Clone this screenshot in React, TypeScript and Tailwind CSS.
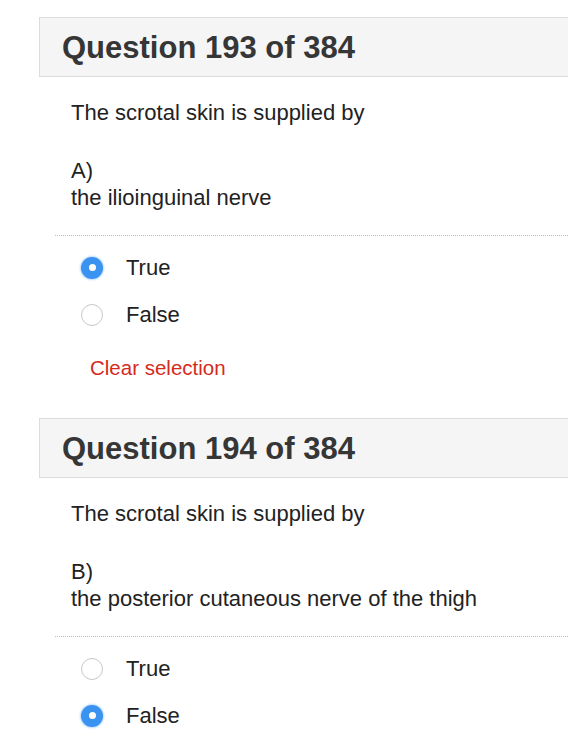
import React from "react";

type Q = {
  num: number;
  letter: string;
  option: string;
  answer: "True" | "False";
  showClear: boolean;
};

const questions: Q[] = [
  { num: 193, letter: "A)", option: "the ilioinguinal nerve", answer: "True", showClear: true },
  { num: 194, letter: "B)", option: "the posterior cutaneous nerve of the thigh", answer: "False", showClear: false },
];

function Radio({ checked }: { checked: boolean }) {
  if (checked) {
    return (
      <span className="flex h-[22px] w-[22px] items-center justify-center rounded-full bg-[#3a93f0] shadow-[0_0_2px_1px_rgba(58,147,240,0.35)]">
        <span className="h-[7px] w-[7px] rounded-full bg-white" />
      </span>
    );
  }
  return <span className="h-[22px] w-[22px] rounded-full border border-[#c8c8c8] bg-white" />;
}

function Question({ q }: { q: Q }) {
  return (
    <div className="mb-[37px]">
      <div className="-mr-10 flex h-[60px] items-center border border-[#dcdcdc] bg-[#f5f5f5] pl-[22px] pt-[3px]">
        <h2 className="text-[31px] font-bold text-[#363636]">
          Question {q.num} of 384
        </h2>
      </div>

      <div className="pl-8 pt-[22px] text-[22px] leading-[27px] text-[#222]">
        <p>The scrotal skin is supplied by</p>
        <p className="mt-[31px]">{q.letter}</p>
        <p>{q.option}</p>
      </div>

      <div className="ml-4 mt-[24px] border-t border-dotted border-[#bbb]" />

      <div className="flex flex-col pt-[8px] text-[22px] text-[#222]">
        {(["True", "False"] as const).map((v) => (
          <label key={v} className="flex h-[47px] items-center pl-[42px]">
            <Radio checked={q.answer === v} />
            <span className="ml-[23px]">{v}</span>
          </label>
        ))}
      </div>

      {q.showClear && (
        <div className="pl-[51px] pt-[16px] text-[20.5px] leading-[27px] text-[#d42a1c]">Clear selection</div>
      )}
    </div>
  );
}

export default function App() {
  return (
    <div
      className="h-[752px] w-[568px] overflow-hidden bg-white pl-[39px] pt-[17px]"
      style={{ fontFamily: '"Liberation Sans", Arial, sans-serif' }}
    >
      {questions.map((q) => (
        <Question key={q.num} q={q} />
      ))}
    </div>
  );
}
